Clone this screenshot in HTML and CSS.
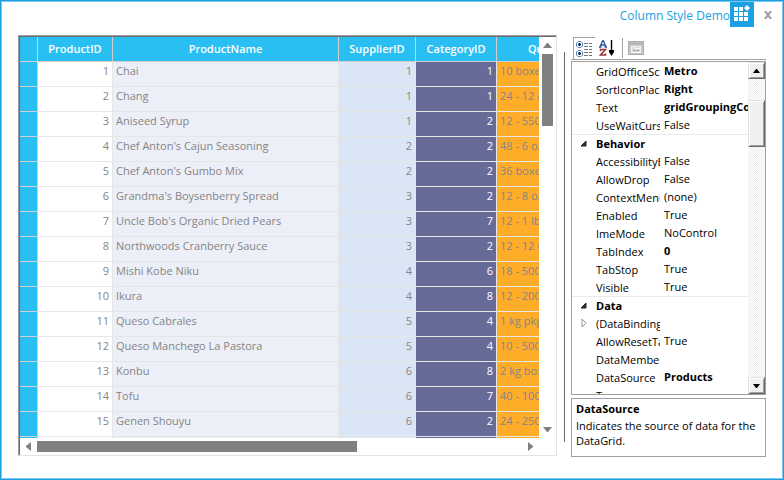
FILE: index.html
```
<!DOCTYPE html>
<html lang="en">
<head>
<meta charset="utf-8">
<title>Column Style Demo</title>
<link rel="stylesheet" href="styles.css">
</head>
<body>
<div class="window">
  <header class="titlebar">
    <h1 class="title">Column Style Demo</h1>
    <svg class="app-icon" viewBox="0 0 24 26" aria-hidden="true">
      <rect width="24" height="26" fill="#1ba1e2"/>
      <path fill="#fff" d="M4 6h4v4H4zM9 6h4v4H9zM4 11h4v4H4zM9 11h4v4H9zM14 11h4v4h-4zM4 16h4v4H4zM9 16h4v4H9zM14 16h4v4h-4zM17 4l3 3-3 3-3-3z"/>
    </svg>
    <button class="close" type="button" aria-label="Close">
      <svg viewBox="0 0 8 8"><path d="M1 0l6 8M7 0L1 8" stroke="#999" stroke-width="2" fill="none"/></svg>
    </button>
  </header>
  <main class="content">
    <section class="grid-box">
      <div class="grid-view">
        <table class="grid">
          <colgroup><col class="c-head"><col class="c-id"><col class="c-name"><col class="c-sup"><col class="c-cat"><col class="c-qty"></colgroup>
          <thead><tr><th></th><th>ProductID</th><th>ProductName</th><th>SupplierID</th><th>CategoryID</th><th>QuantityPerUnit</th></tr></thead>
          <tbody>
            <tr><th></th><td>1</td><td>Chai</td><td>1</td><td>1</td><td>10 boxes x 20 bags</td></tr>
            <tr><th></th><td>2</td><td>Chang</td><td>1</td><td>1</td><td>24 - 12 oz bottles</td></tr>
            <tr><th></th><td>3</td><td>Aniseed Syrup</td><td>1</td><td>2</td><td>12 - 550 ml bottles</td></tr>
            <tr><th></th><td>4</td><td>Chef Anton's Cajun Seasoning</td><td>2</td><td>2</td><td>48 - 6 oz jars</td></tr>
            <tr><th></th><td>5</td><td>Chef Anton's Gumbo Mix</td><td>2</td><td>2</td><td>36 boxes</td></tr>
            <tr><th></th><td>6</td><td>Grandma's Boysenberry Spread</td><td>3</td><td>2</td><td>12 - 8 oz jars</td></tr>
            <tr><th></th><td>7</td><td>Uncle Bob's Organic Dried Pears</td><td>3</td><td>7</td><td>12 - 1 lb pkgs.</td></tr>
            <tr><th></th><td>8</td><td>Northwoods Cranberry Sauce</td><td>3</td><td>2</td><td>12 - 12 oz jars</td></tr>
            <tr><th></th><td>9</td><td>Mishi Kobe Niku</td><td>4</td><td>6</td><td>18 - 500 g pkgs.</td></tr>
            <tr><th></th><td>10</td><td>Ikura</td><td>4</td><td>8</td><td>12 - 200 ml jars</td></tr>
            <tr><th></th><td>11</td><td>Queso Cabrales</td><td>5</td><td>4</td><td>1 kg pkg.</td></tr>
            <tr><th></th><td>12</td><td>Queso Manchego La Pastora</td><td>5</td><td>4</td><td>10 - 500 g pkgs.</td></tr>
            <tr><th></th><td>13</td><td>Konbu</td><td>6</td><td>8</td><td>2 kg box</td></tr>
            <tr><th></th><td>14</td><td>Tofu</td><td>6</td><td>7</td><td>40 - 100 g pkgs.</td></tr>
            <tr><th></th><td>15</td><td>Genen Shouyu</td><td>6</td><td>2</td><td>24 - 250 ml bottles</td></tr>
            <tr><th></th><td></td><td></td><td></td><td></td><td></td></tr>
          </tbody>
        </table>
      </div>
      <div class="vbar" aria-hidden="true">
        <svg class="arrow-v" viewBox="0 0 9 5"><path d="M0 5h9L5 0H4z"/></svg>
        <div class="vthumb"></div>
        <svg class="arrow-v" viewBox="0 0 9 5"><path d="M0 0h9L5 5H4z"/></svg>
      </div>
      <div class="hbar" aria-hidden="true">
        <svg class="arrow-h" viewBox="0 0 5 9"><path d="M5 0v9L0 5V4z"/></svg>
        <div class="htrack"><div class="hthumb"></div></div>
        <svg class="arrow-h" viewBox="0 0 5 9"><path d="M0 0v9l5-4V4z"/></svg>
      </div>
    </section>
    <div class="splitter"></div>
    <aside class="props">
      <div class="toolbar">
        <button class="tool pressed" type="button" aria-label="Categorized">
          <svg viewBox="0 0 16 16" fill="none">
            <path d="M2 .5h3L6.500 2v3L5 6.500H2L.5 5V2zM2 9.500h3L6.500 11v3L5 15.500H2L.5 14v-3z" fill="#fff" stroke="#5b87b5"/>
            <path d="M2 3.500h3M3.500 2v3M2 12.500h3M3.500 11v3" stroke="#071d55" stroke-width="1.500"/>
            <path d="M8 2.500h4M13 2.500h3M8 5.500h4M13 5.500h3M8 8.500h4M13 8.500h3M8 11.500h4M13 11.500h3M8 14.500h4M13 14.500h3" stroke="#777"/>
          </svg>
        </button>
        <button class="tool" type="button" aria-label="Alphabetical">
          <svg viewBox="0 0 16 16" fill="none">
            <path d="M1 7l2.500-6h1L7 7M2 5h4M0 7h2.500M5.500 7H8" stroke="#28529c" stroke-width="1.300"/>
            <path d="M1.500 11V9.500h5L1.500 15h5v-1.500" stroke="#a43336" stroke-width="1.500"/>
            <path d="M12.500 0v13" stroke="#000" stroke-width="1.400"/><path d="M10 10h5v2l-2.500 4L10 12z" fill="#000"/>
          </svg>
        </button>
        <span class="tool-sep"></span>
        <button class="tool" type="button" aria-label="Property Pages" disabled>
          <svg viewBox="0 0 16 16" fill="none">
            <path d="M0 1h16v14H0z" fill="#c6c6c6"/><path d="M.5 1.500h15v13H.5zM1 3.500h14" stroke="#aaa"/>
            <path d="M3.500 12.500v-6h4v2h5v4zM8 6.500h4.500v2" fill="#ddd" stroke="#f6f6f6"/><path d="M5 10.500h2M8 10.500h3" stroke="#999"/>
          </svg>
        </button>
      </div>
      <div class="prop-box">
        <div class="prop-view">
          <table class="prop-table">
            <colgroup><col class="p-mark"><col class="p-name"><col></colgroup>
            <tbody>
              <tr><td></td><th>GridOfficeScrollBars</th><td class="set">Metro</td></tr>
              <tr><td></td><th>SortIconPlacement</th><td class="set">Right</td></tr>
              <tr><td></td><th>Text</th><td class="set">gridGroupingControl1</td></tr>
              <tr><td></td><th>UseWaitCursor</th><td>False</td></tr>
              <tr class="category"><td><svg class="mark" viewBox="0 0 8 8"><path d="M6 1v5H1z" fill="#333" stroke="#222"/></svg></td><th colspan="2">Behavior</th></tr>
              <tr><td></td><th>AccessibilityEnabled</th><td>False</td></tr>
              <tr><td></td><th>AllowDrop</th><td>False</td></tr>
              <tr><td></td><th>ContextMenuStrip</th><td>(none)</td></tr>
              <tr><td></td><th>Enabled</th><td>True</td></tr>
              <tr><td></td><th>ImeMode</th><td>NoControl</td></tr>
              <tr><td></td><th>TabIndex</th><td class="set">0</td></tr>
              <tr><td></td><th>TabStop</th><td>True</td></tr>
              <tr><td></td><th>Visible</th><td>True</td></tr>
              <tr class="category"><td><svg class="mark" viewBox="0 0 8 8"><path d="M6 1v5H1z" fill="#333" stroke="#222"/></svg></td><th colspan="2">Data</th></tr>
              <tr><td><svg class="mark" viewBox="0 0 8 8"><path d="M2 0l4 4-4 4z" fill="#fff" stroke="#999"/></svg></td><th>(DataBindings)</th><td></td></tr>
              <tr><td></td><th>AllowResetTable</th><td>True</td></tr>
              <tr><td></td><th>DataMember</th><td></td></tr>
              <tr><td></td><th>DataSource</th><td class="set">Products</td></tr>
              <tr><td></td><th>Tag</th><td></td></tr>
            </tbody>
          </table>
        </div>
        <div class="classic-bar">
          <button class="raised" type="button" aria-label="Scroll up"><svg viewBox="0 0 7 4"><path d="M0 4h7L4 0H3z"/></svg></button>
          <div class="raised classic-thumb"></div>
          <button class="raised" type="button" aria-label="Scroll down"><svg viewBox="0 0 7 4"><path d="M0 0h7L4 4H3z"/></svg></button>
        </div>
      </div>
      <div class="help">
        <h2>DataSource</h2>
        <p>Indicates the source of data for the DataGrid.</p>
      </div>
    </aside>
  </main>
</div>
</body>
</html>
```
FILE: styles.css
```
* { box-sizing: border-box; }

body {
  margin: 0;
  background: #fff;
  color: #000;
  font: 11px/15px "Open Sans", "Noto Sans", sans-serif;
}

button {
  padding: 0;
  border: 0;
  background: none;
  font: inherit;
}

svg { display: block; }

.window {
  display: flex;
  flex-direction: column;
  height: 100vh;
  border: 1px solid #1ba1e2;
  outline: 1px solid #7cc8ee;
  outline-offset: -2px;
}

.titlebar {
  display: flex;
  align-items: flex-start;
  justify-content: flex-end;
  height: 34px;
  padding-right: 11px;
}

.title {
  margin: 6px 0 0;
  color: #1ba1e2;
  font-size: 12px;
  font-weight: 400;
  line-height: 18px;
}

.app-icon {
  width: 24px;
  height: 26px;
}

.close {
  margin: 10px 0 0 10px;
}

.close svg {
  width: 8px;
  height: 8px;
}

.content {
  display: flex;
  flex: 1;
  min-height: 0;
  padding: 0 17px 22px;
}

/* Data grid */

.grid-box {
  display: grid;
  flex: 1;
  grid-template: minmax(0, 1fr) 17px / minmax(0, 1fr) 17px;
  min-width: 0;
  margin-bottom: 1px;
  padding: 1px 0 0 1px;
  border: 1px solid;
  border-color: #a0a0a0 #e3e3e3 #e3e3e3 #a0a0a0;
  box-shadow: inset 1px 1px #696969;
}

.grid-view { overflow: hidden; }

.grid {
  width: 627px;
  border-spacing: 0;
  table-layout: fixed;
  color: #858585;
}

.c-head { width: 18px; }
.c-id { width: 75px; }
.c-name { width: 226px; }
.c-sup { width: 77px; }
.c-cat { width: 81px; }
.c-qty { width: 150px; }

.grid th,
.grid td {
  height: 25px;
  padding: 0 3px;
  border: solid #e6e6e6;
  border-width: 0 1px 1px 0;
  overflow: hidden;
  white-space: nowrap;
}

.grid td {
  padding-bottom: 7px;
  text-align: right;
}

.grid th {
  padding-bottom: 2px;
  border-color: #d0d0d0;
  background: #2abff2;
  color: #fff;
  font-weight: 600;
}

.grid td:nth-child(3) {
  background: #eceff8;
  text-align: left;
}

.grid td:nth-child(4) { background: #dae5f5; }

.grid td:nth-child(5) {
  background: #666c97;
  color: #fff;
}

.grid td:nth-child(6) {
  background: #ffac28;
  text-align: left;
}

.vbar {
  display: flex;
  flex-direction: column;
  align-items: center;
  padding: 6px 0;
}

.arrow-v {
  width: 9px;
  height: 5px;
  fill: #808080;
}

.vthumb {
  width: 11px;
  height: 72px;
  margin: 6px 0 auto;
  background: #808080;
}

.hbar {
  display: flex;
  align-items: center;
  padding: 0 6px;
}

.arrow-h {
  width: 5px;
  height: 9px;
  fill: #808080;
}

.htrack {
  flex: 1;
  padding: 0 6px;
}

.hthumb {
  width: 66%;
  height: 11px;
  background: #808080;
}

.splitter {
  width: 1px;
  margin: 17px 6px 15px 7px;
  background: #696969;
}

/* Property browser */

.props {
  display: flex;
  flex-direction: column;
  width: 195px;
}

.toolbar {
  display: flex;
  gap: 2px;
  align-items: center;
  height: 25px;
  margin-bottom: 1px;
  padding: 2px 0 0 2px;
  border-bottom: 1px solid #a0a0a0;
}

.tool {
  width: 22px;
  height: 22px;
  padding: 2px;
}

.tool svg {
  width: 16px;
  height: 16px;
}

.pressed {
  border: solid #a0a0a0;
  border-width: 1px 0 0 1px;
}

.tool-sep {
  width: 1px;
  height: 20px;
  margin: 0 1px;
  background: #a0a0a0;
}

.prop-box {
  display: flex;
  flex: 1;
  min-height: 0;
  border: 1px solid #a0a0a0;
}

.prop-view {
  flex: 1;
  min-width: 0;
  overflow: hidden;
}

.prop-table {
  width: 100%;
  border-spacing: 0;
  table-layout: fixed;
}

.p-mark { width: 24px; }
.p-name { width: 64px; }

.prop-table th,
.prop-table td {
  height: 18px;
  padding: 0;
  overflow: hidden;
  white-space: nowrap;
}

.prop-table th {
  font-weight: 400;
  text-align: left;
}

.prop-table td:nth-child(3) { padding: 0 0 2px 4px; }
.prop-table .set { font-weight: 700; }

.category th,
.category td { border-top: 1px solid #ebebeb; }

.prop-table .category th { font-weight: 700; }

.mark {
  width: 8px;
  height: 8px;
  margin-left: 8px;
}

.classic-bar {
  display: flex;
  flex-direction: column;
  width: 17px;
  background: repeating-conic-gradient(#fff 0 25%, #ececec 0 50%) 0 0 / 2px 2px;
}

.raised {
  display: grid;
  place-items: center;
  height: 17px;
  border: 1px solid;
  border-color: #e3e3e3 #696969 #696969 #e3e3e3;
  background: #f0f0f0;
  box-shadow: inset 1px 1px #fff, inset -1px -1px #a0a0a0;
}

.raised svg {
  width: 7px;
  height: 4px;
}

.classic-thumb {
  height: 47px;
  margin: 21px 0 auto;
}

.help {
  height: 59px;
  margin-top: 3px;
  padding: 2px 4px;
  border: 1px solid #a0a0a0;
}

.help h2 {
  margin: 0 0 2px;
  font-size: 11px;
  line-height: 15px;
}

.help p { margin: 0; }
```
